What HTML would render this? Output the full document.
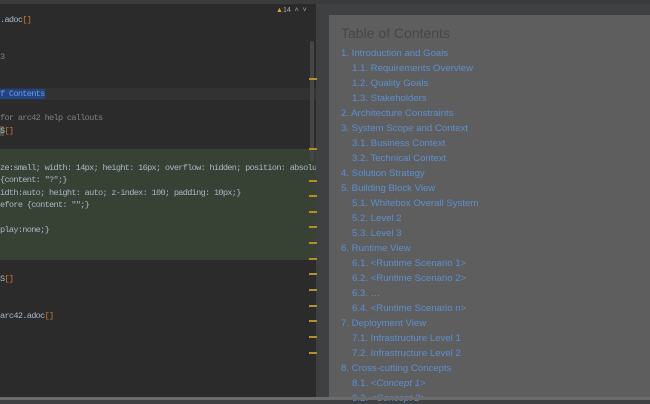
<!DOCTYPE html>
<html><head><style>
body{margin:0;width:650px;height:400px;overflow:hidden;background:#3e4042;position:relative;font-family:"Liberation Mono",monospace}
#top{position:absolute;left:0;top:0;width:650px;height:4px;background:#3a3b3d}
#ed{position:absolute;left:0;top:4px;width:316px;height:393px;background:#2b2b2b;overflow:hidden}
.l{position:absolute;left:0;font-size:8.6px;letter-spacing:-0.7px;color:#a9b7c6;white-space:pre;line-height:12px}
.g{color:#808080}.o{color:#cc7832}
#green{position:absolute;left:0;top:145px;width:316px;height:111px;background:#374134}
#cur{position:absolute;left:0;top:84px;width:316px;height:12px;background:#323232}
.m{position:absolute;left:309px;width:8px;height:1.5px;background:#b58f2b}
#doc{position:absolute;left:329px;top:15px;width:321px;height:382px;background:#5e5e5e;font-family:"Liberation Sans",sans-serif}
#doc h1{position:absolute;left:12px;top:10px;margin:0;font-weight:normal;font-size:14px;color:#474747}
.t{position:absolute;font-size:9.6px;color:#5d8fd0;white-space:nowrap}
#bot{position:absolute;left:0;top:397px;width:650px;height:3px;background:#6a6b6d}
</style></head><body>
<div id="top"></div>
<div id="ed">
<div id="cur"></div>
<div id="green"></div>
<div class="l" style="top:10px">.adoc<span class="o">[]</span></div>
<div class="l g" style="top:47px">3</div>
<div class="l" style="top:84px"><span style="background:#214283;color:#6d9fd8">f Contents</span></div>
<div class="l g" style="top:108px">for arc42 help callouts</div>
<div class="l" style="top:121px"><span style="background:#52503a">S</span><span class="o">[]</span></div>
<div class="l" style="top:158px">ze:small; width: 14px; height: 16px; overflow: hidden; position: absolu</div>
<div class="l" style="top:170px">{content: "?";}</div>
<div class="l" style="top:183px">idth:auto; height: auto; z-index: 100; padding: 10px;}</div>
<div class="l" style="top:195px">efore {content: "";}</div>
<div class="l" style="top:220px">play:none;}</div>
<div class="l" style="top:269px">S<span class="o">[]</span></div>
<div class="l" style="top:306px">arc42.adoc<span class="o">[]</span></div>
<div style="position:absolute;left:276px;top:3px;font:7px 'Liberation Sans',sans-serif;color:#aaa"><span style="color:#d9a33a">▲</span>14 &nbsp;˄ &nbsp;˅</div>
<div style="position:absolute;left:310px;top:37px;width:4px;height:120px;background:#464646;border-radius:2px"></div>
</div>
<div class="m" style="top:78px"></div><div class="m" style="top:148px"></div><div class="m" style="top:180px"></div><div class="m" style="top:195px"></div><div class="m" style="top:211px"></div><div class="m" style="top:226px"></div><div class="m" style="top:242px"></div><div class="m" style="top:258px"></div><div class="m" style="top:273px"></div><div class="m" style="top:289px"></div><div class="m" style="top:305px"></div><div class="m" style="top:320px"></div><div class="m" style="top:336px"></div><div class="m" style="top:352px"></div>
<div id="doc">
<h1>Table of Contents</h1>
<div class="t" style="left:12px;top:33px">1. Introduction and Goals</div>
<div class="t" style="left:23px;top:48px">1.1. Requirements Overview</div>
<div class="t" style="left:23px;top:63px">1.2. Quality Goals</div>
<div class="t" style="left:23px;top:78px">1.3. Stakeholders</div>
<div class="t" style="left:12px;top:93px">2. Architecture Constraints</div>
<div class="t" style="left:12px;top:108px">3. System Scope and Context</div>
<div class="t" style="left:23px;top:123px">3.1. Business Context</div>
<div class="t" style="left:23px;top:138px">3.2. Technical Context</div>
<div class="t" style="left:12px;top:153px">4. Solution Strategy</div>
<div class="t" style="left:12px;top:168px">5. Building Block View</div>
<div class="t" style="left:23px;top:183px">5.1. Whitebox Overall System</div>
<div class="t" style="left:23px;top:198px">5.2. Level 2</div>
<div class="t" style="left:23px;top:213px">5.3. Level 3</div>
<div class="t" style="left:12px;top:228px">6. Runtime View</div>
<div class="t" style="left:23px;top:243px">6.1. &lt;Runtime Scenario 1&gt;</div>
<div class="t" style="left:23px;top:258px">6.2. &lt;Runtime Scenario 2&gt;</div>
<div class="t" style="left:23px;top:273px">6.3. …</div>
<div class="t" style="left:23px;top:288px">6.4. &lt;Runtime Scenario n&gt;</div>
<div class="t" style="left:12px;top:303px">7. Deployment View</div>
<div class="t" style="left:23px;top:318px">7.1. Infrastructure Level 1</div>
<div class="t" style="left:23px;top:333px">7.2. Infrastructure Level 2</div>
<div class="t" style="left:12px;top:348px">8. Cross-cutting Concepts</div>
<div class="t" style="left:23px;top:363px">8.1. <i>&lt;Concept 1&gt;</i></div>
<div class="t" style="left:23px;top:378px">8.2. <i>&lt;Concept 2&gt;</i></div>
</div>
<div id="bot"></div>
</body></html>
